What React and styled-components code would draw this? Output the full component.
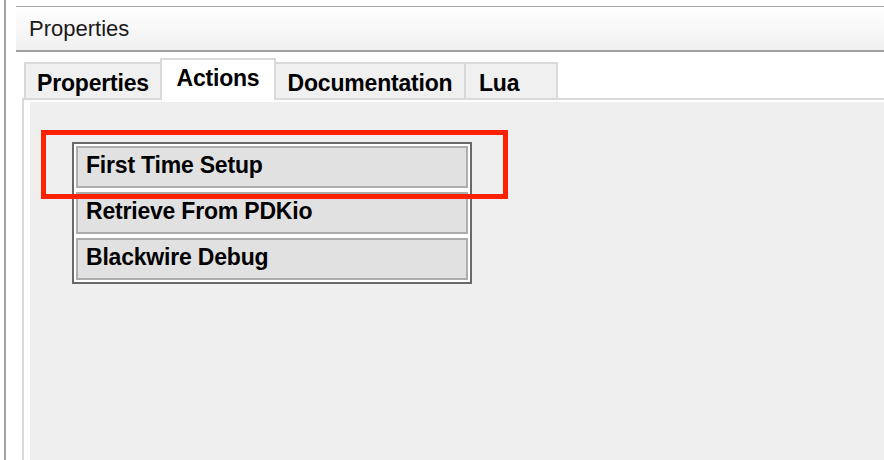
import React from "react";
import styled, { createGlobalStyle } from "styled-components";

const GlobalStyle = createGlobalStyle`
  body {
    margin: 0;
    background: #ffffff;
    font-family: "Liberation Sans", Arial, sans-serif;
    color: #000;
  }
`;

const tabs = [
  { label: "Properties", width: 136, pad: 0, first: true },
  { label: "Actions", width: 116, pad: 0, active: true },
  { label: "Documentation", width: 188, pad: 0 },
  { label: "Lua", width: 94, pad: 13, last: true },
];

const actions = ["First Time Setup", "Retrieve From PDKio", "Blackwire Debug"];

export default function App() {
  return (
    <>
      <GlobalStyle />
      <Frame>
        <LeftRule />
        <Main>
          <Header>Properties</Header>
          <TabArea>
            <TabRow>
              {tabs.map((t) => (
                <Tab
                  key={t.label}
                  $w={t.width}
                  $pad={t.pad}
                  $active={t.active}
                  $edge={t.first || t.last}
                  $last={t.last}
                >
                  {t.label}
                </Tab>
              ))}
            </TabRow>
            <Panel>
              <Content>
                <ActionList>
                  {actions.map((a) => (
                    <ActionItem key={a}>{a}</ActionItem>
                  ))}
                </ActionList>
                <Highlight />
              </Content>
            </Panel>
          </TabArea>
        </Main>
      </Frame>
    </>
  );
}

const Frame = styled.div`
  display: flex;
  height: 460px;
  overflow: hidden;
`;

const LeftRule = styled.div`
  width: 2px;
  margin-left: 4px;
  background: #a4a4a4;
`;

const Main = styled.div`
  flex: 1;
  display: flex;
  flex-direction: column;
  padding: 6px 0 0 10px;
`;

const Header = styled.div`
  height: 43px;
  box-sizing: content-box;
  border-top: 1px solid #a6a6a6;
  border-bottom: 2px solid #a0a0a0;
  background: linear-gradient(#ffffff, #f0f0f0);
  padding-left: 13px;
  font-size: 22px;
  line-height: 22px;
  display: flex;
  align-items: center;
  color: #1a1a1a;
`;

const TabArea = styled.div`
  flex: 1;
  display: flex;
  flex-direction: column;
  margin-left: 6px;
  padding-top: 6px;
`;

const TabRow = styled.div`
  display: flex;
  align-items: flex-end;
  padding-left: 2px;
  position: relative;
  z-index: 1;
`;

const Tab = styled.div`
  box-sizing: border-box;
  width: ${(p) => p.$w}px;
  height: ${(p) => (p.$active ? 42 : 36)}px;
  margin-bottom: ${(p) => (p.$active ? -2 : 0)}px;
  padding-top: ${(p) => (p.$active ? 7 : 8)}px;
  padding-left: ${(p) => p.$pad}px;
  text-align: ${(p) => (p.$pad ? "left" : "center")};
  background: ${(p) => (p.$active ? "#ffffff" : "#f0f0f0")};
  border-top: 2px solid #d9d9d9;
  border-left: ${(p) => (p.$active || p.$edge ? "2px solid #d9d9d9" : "none")};
  border-right: ${(p) => (p.$active || p.$last ? "2px solid #d9d9d9" : "none")};
  font-weight: bold;
  font-size: 23px;
  line-height: 23px;
  letter-spacing: -0.2px;
  white-space: nowrap;
`;

const Panel = styled.div`
  flex: 1;
  display: flex;
  border-top: 2px solid #d9d9d9;
  border-left: 2px solid #d9d9d9;
  background: #ffffff;
  padding: 2px 0 0 6px;
`;

const Content = styled.div`
  flex: 1;
  position: relative;
  background: #efefef;
  padding: 40px 0 0 42px;
`;

const ActionList = styled.div`
  box-sizing: border-box;
  width: 400px;
  display: flex;
  flex-direction: column;
  gap: 4px;
  padding: 2px;
  background: #ffffff;
  border: 2px solid #696969;
`;

const ActionItem = styled.div`
  box-sizing: border-box;
  height: 42px;
  border: 2px solid #adadad;
  background: #e1e1e1;
  padding: 6px 0 0 8px;
  font-weight: bold;
  font-size: 23px;
  line-height: 23px;
  letter-spacing: -0.2px;
  white-space: nowrap;
`;

const Highlight = styled.div`
  position: absolute;
  left: 11px;
  top: 28px;
  width: 467px;
  height: 69px;
  box-sizing: border-box;
  border: 5px solid #fe2202;
  pointer-events: none;
`;
